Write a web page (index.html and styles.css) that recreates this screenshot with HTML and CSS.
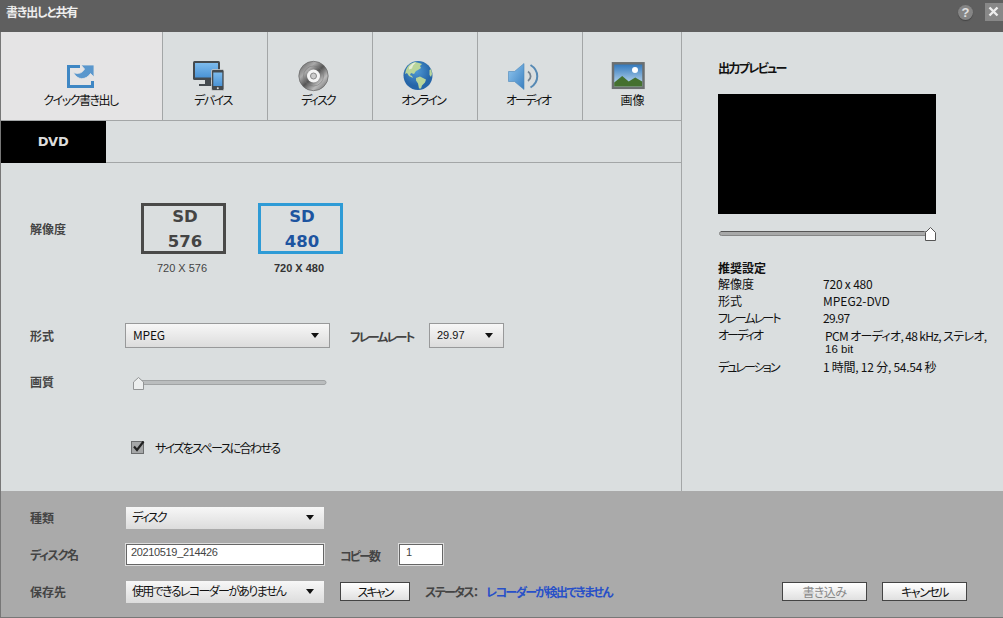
FILE: index.html
```html
<!DOCTYPE html>
<html lang="ja">
<head>
    <meta charset="UTF-8">
    <meta name="viewport" content="width=device-width, initial-scale=1.0">
    <title>書き出しと共有</title>
    <link rel="stylesheet" href="styles.css">
</head>
<body>
    <div class="window">
        <header class="titlebar">
            <h1>書き出しと共有</h1>
            <span class="help">?</span>
            <button class="close" type="button" aria-label="閉じる">
                <svg width="18" height="18" viewBox="0 0 18 18"><path d="M4.500 4.500l8 8M12.500 4.500l-8 8" stroke="#eee" stroke-width="2.4"/></svg>
            </button>
        </header>

        <div class="main">
            <section class="settings">
                <nav class="tabs">
                    <div class="tab active">
                        <svg width="36" height="36" viewBox="0 0 36 36">
                            <path d="M18 9.500H6.500v20h24V24" fill="none" stroke="#3f87c4" stroke-width="3"/>
                            <path d="M11.500 15.500c5 2 9 .5 11-3.500l-3.500-4h13v12l-3.500-3.500c-4.500 7-13.500 7-17-1z" fill="#5a97cd" stroke="#e5e4e5" stroke-width=".8"/>
                        </svg>
                        <span class="t-quick">クイック書き出し</span>
                    </div>
                    <div class="tab">
                        <svg width="36" height="36" viewBox="0 0 36 36">
                            <defs><linearGradient id="screen" x2="0" y2="1"><stop stop-color="#7dbbed"/><stop offset="1" stop-color="#4a93d6"/></linearGradient></defs>
                            <path d="M14 21h6v6h3v2H8v-2h6z" fill="#444a4f"/>
                            <rect x="2" y="4" width="27" height="19" rx="1.500" fill="#444a4f"/>
                            <rect x="4" y="6" width="23" height="14.500" fill="url(#screen)"/>
                            <rect x="20.500" y="12.500" width="12.500" height="21" rx="1.500" fill="#444a4f" stroke="#ddd" stroke-width=".7"/>
                            <rect x="22.300" y="15.500" width="9" height="13.500" fill="url(#screen)"/>
                            <circle cx="26.800" cy="31.300" r="1" fill="#ddd"/>
                        </svg>
                        <span class="t-device">デバイス</span>
                    </div>
                    <div class="tab">
                        <svg width="36" height="36" viewBox="0 0 36 36">
                            <defs><linearGradient id="disc" x2="1" y2="1"><stop stop-color="#555"/><stop offset=".3" stop-color="#aaa"/><stop offset=".5" stop-color="#555"/><stop offset=".72" stop-color="#bbb"/><stop offset="1" stop-color="#555"/></linearGradient></defs>
                            <circle cx="17.500" cy="19" r="14.700" fill="url(#disc)" stroke="#666" stroke-width=".7"/>
                            <circle cx="17.500" cy="19" r="10" fill="none" stroke="#777" stroke-width=".5"/>
                            <circle cx="17.500" cy="19" r="6.500" fill="#f4f4f4"/>
                            <circle cx="17.500" cy="19" r="3" fill="#ccc" stroke="#888"/>
                        </svg>
                        <span class="t-disc">ディスク</span>
                    </div>
                    <div class="tab">
                        <svg width="36" height="36" viewBox="0 0 36 36">
                            <defs><radialGradient id="sea" cx=".45" cy=".35"><stop stop-color="#4f98d4"/><stop offset="1" stop-color="#2565a8"/></radialGradient></defs>
                            <circle cx="17" cy="18.500" r="14.500" fill="url(#sea)"/>
                            <path d="M5 13c2-5 5-7 9-8l4 1 3 1-2 2 1 2-3 2-2 1-2 3-3-1-1 2 2 1 1 2-4-2-2-3-2 1zM15 21l4-1.500 6 3-1 3-3 3-1 3-2 0-1-5-2-3zM28.500 13l1.800-1 .7 5-1 3-1.500-2z" fill="#b9d59a"/>
                            <path d="M8 10l4-4 3-.5-3 3-1 3-3 1z" fill="#e4ecd8"/>
                        </svg>
                        <span class="t-online">オンライン</span>
                    </div>
                    <div class="tab">
                        <svg width="36" height="36" viewBox="0 0 36 36">
                            <defs><linearGradient id="horn" x2="1" y2="1"><stop stop-color="#93c8f0"/><stop offset="1" stop-color="#397fc0"/></linearGradient></defs>
                            <path d="M2.500 14.500h6L18 6.500v26l-9.500-8h-6z" fill="url(#horn)" stroke="#4a86ba" stroke-width=".6"/>
                            <path d="M22 14.500c3.500 2.500 3.500 7 0 9.500" fill="none" stroke="#75828e" stroke-width="1.800"/>
                            <path d="M24.500 8c9 5.500 9 17 0 22.500" fill="none" stroke="#5689b4" stroke-width="2"/>
                        </svg>
                        <span class="t-audio">オーディオ</span>
                    </div>
                    <div class="tab last">
                        <svg width="36" height="36" viewBox="0 0 36 36">
                            <defs><linearGradient id="sky" x2="0" y2="1"><stop stop-color="#2b74bb"/><stop offset="1" stop-color="#d2e7f5"/></linearGradient></defs>
                            <rect x="3" y="6.300" width="30.500" height="24.500" fill="url(#sky)" stroke="#6b6f70" stroke-width="2.500"/>
                            <path d="M4.200 25.500l8-6.500 6.500 5.500 6.500-4 7 4v5h-28z" fill="#44702f"/>
                            <circle cx="25" cy="13" r="3" fill="#fff"/>
                        </svg>
                        <span class="t-image">画像</span>
                    </div>
                </nav>
                <div class="subtabs">
                    <div class="subtab">DVD</div>
                </div>

                <div class="row resolution">
                    <span class="label">解像度</span>
                    <div class="preset">
                        <div class="preset-box">SD<br>576</div>
                        <span>720 X 576</span>
                    </div>
                    <div class="preset selected">
                        <div class="preset-box">SD<br>480</div>
                        <span>720 X 480</span>
                    </div>
                </div>
                <div class="row format">
                    <span class="label">形式</span>
                    <div class="select format-select"><span>MPEG</span><i class="arrow"></i></div>
                    <span class="label-inline t-frame">フレームレート</span>
                    <div class="select rate-select"><span>29.97</span><i class="arrow"></i></div>
                </div>
                <div class="row quality">
                    <span class="label">画質</span>
                    <svg width="196" height="16" viewBox="0 0 196 16">
                        <rect x="4" y="4.500" width="190" height="4" rx="2" fill="#babdbe" stroke="#a0a3a4"/>
                        <path d="M1.500 13.500V6l5-4.500 5 4.500v7.500z" fill="#eceeee" stroke="#939596"/>
                    </svg>
                </div>
                <div class="row fit">
                    <svg width="14" height="14" viewBox="0 0 14 14">
                        <rect x=".5" y=".5" width="12" height="12" fill="#a5a7a8" stroke="#6b6d6e"/>
                        <path d="M3 5.500l3 3.500 6.500-8.500" fill="none" stroke="#222" stroke-width="2.200"/>
                    </svg>
                    <span class="t-fit">サイズをスペースに合わせる</span>
                </div>
            </section>

            <aside class="preview">
                <h2 class="t-preview">出力プレビュー</h2>
                <div class="screen"></div>
                <svg class="seek" width="220" height="16" viewBox="0 0 220 16">
                    <rect x="1.500" y="5.500" width="212" height="4" rx="2" fill="#a8a9a9" stroke="#858686"/>
                    <path d="M3 5.500h203" stroke="#555"/>
                    <path d="M207.500 14.500V6.500l5-5 5 5v8z" fill="#fff" stroke="#555"/>
                </svg>
                <h2 class="t-recommend">推奨設定</h2>
                <dl>
                    <dt>解像度</dt><dd class="v-size">720 x 480</dd>
                    <dt>形式</dt><dd>MPEG2-DVD</dd>
                    <dt class="t-frame">フレームレート</dt><dd class="v-rate">29.97</dd>
                    <dt class="t-audio">オーディオ</dt><dd class="audio">PCM オーディオ, 48 kHz, ステレオ,<br><span class="bits">16 bit</span></dd>
                    <dt class="t-duration">デュレーション</dt><dd class="v-time">1 時間, 12 分, 54.54 秒</dd>
                </dl>
            </aside>
        </div>

        <footer class="output">
            <div class="row">
                <span class="label">種類</span>
                <div class="select"><span class="t-disc">ディスク</span><i class="arrow"></i></div>
            </div>
            <div class="row">
                <span class="label t-name">ディスク名</span>
                <div class="field name-field">20210519_214426</div>
                <span class="label-inline t-copy">コピー数</span>
                <div class="field copy-field">1</div>
            </div>
            <div class="row">
                <span class="label">保存先</span>
                <div class="select"><span class="t-recorder">使用できるレコーダーがありません</span><i class="arrow"></i></div>
                <button class="scan t-scan" type="button">スキャン</button>
                <span class="label-inline t-status">ステータス：</span>
                <span class="status">レコーダーが検出できません</span>
                <button class="write" type="button" disabled>書き込み</button>
                <button class="cancel t-cancel" type="button">キャンセル</button>
            </div>
        </footer>
    </div>
</body>
</html>
```
FILE: styles.css
```css
* {
    box-sizing: border-box;
}
body {
    margin: 0;
    font-family: "Noto Sans CJK JP", sans-serif;
    font-size: 12px;
    line-height: 16px;
    font-feature-settings: "palt";
    color: #111;
}
h1, h2, dl, dd {
    margin: 0;
    font-size: 12px;
}
svg {
    display: block;
    flex: none;
}
span, dt, dd, h1, h2, button {
    white-space: nowrap;
}
.window {
    display: flex;
    flex-direction: column;
    width: 1003px;
    height: 618px;
    overflow: hidden;
    background: #dadedf;
    border-bottom: 1px solid #777;
}

/* title bar */
.titlebar {
    display: flex;
    align-items: flex-start;
    height: 32px;
    padding: 4px 0 0 6px;
    background: #5f5f5f;
}
.titlebar h1 {
    flex: 1;
    color: #eee;
    font-weight: bold;
    letter-spacing: -1.1px;
}
.help {
    width: 15px;
    height: 15px;
    margin: 1px 12px 0 0;
    border-radius: 50%;
    background: #858585;
    box-shadow: 0 1px 1px #444;
    color: #e0e0e0;
    font: bold 13px/15px "Liberation Sans", sans-serif;
    text-align: center;
}
.close {
    width: 18px;
    height: 18px;
    margin-top: -1px;
    padding: 0;
    border: none;
    background: #888;
}

.main {
    display: flex;
    height: 459px;
    border-left: 1px solid #777;
}
.settings {
    width: 681px;
    border-right: 1px solid #a3a6a7;
}

/* tabs */
.tabs {
    display: flex;
    height: 89px;
    border-bottom: 1px solid #a3a6a7;
}
.tab {
    display: flex;
    flex-direction: column;
    align-items: center;
    width: 105px;
    padding: 25px 5px 0 0;
    border-right: 1px solid #a3a6a7;
}
.tab svg {
    margin-right: 7px;
}
.tab.active {
    width: 162px;
    padding-right: 2px;
    background: #e5e4e5;
}
.tab.active svg {
    margin-right: 2px;
}
.tab.active span {
    padding-left: 0;
}
.tab.last {
    width: 98px;
    padding: 25px 0 0;
    border-right: none;
}
.tab.last svg {
    margin-right: 8px;
}
.tab span {
    margin-top: -1px;
    padding-left: 1px;
}
.subtabs {
    height: 42px;
    border-bottom: 1px solid #a3a6a7;
}
.subtab {
    width: 105px;
    height: 42px;
    padding-right: 1px;
    background: #000;
    color: #ddd;
    font: bold 13px/42px "DejaVu Sans", sans-serif;
    letter-spacing: -0.3px;
    text-align: center;
}

/* settings rows */
.row {
    display: flex;
    align-items: center;
}
.label {
    width: 95px;
    color: #444;
    font-weight: bold;
}
.label-inline {
    color: #444;
    font-weight: bold;
}
.settings .row {
    padding-left: 29px;
}
.resolution {
    align-items: flex-start;
    height: 159px;
    padding-top: 40px;
}
.resolution .label {
    width: 111px;
    padding-top: 18px;
}
.preset {
    width: 85px;
    margin-right: 32px;
    text-align: center;
    font: 11px/16px "Liberation Sans", sans-serif;
    color: #444;
}
.preset-box {
    display: flex;
    flex-direction: column;
    justify-content: center;
    height: 51px;
    margin-bottom: 6px;
    padding-left: 3px;
    border: 3px solid #4a4a49;
    font: bold 16.500px/25px "DejaVu Sans", sans-serif;
}
.preset span {
    padding-right: 3px;
}
.preset.selected {
    font-weight: bold;
    color: #333;
}
.preset.selected .preset-box {
    border-color: #2e9bd6;
    color: #1d54a0;
}
.format {
    height: 27px;
}
.select {
    display: flex;
    align-items: center;
    justify-content: space-between;
    width: 198px;
    height: 22px;
    padding: 0 10px 2px 6px;
    background: linear-gradient(#f7f7f7, #dcdcdc);
}
.format .select {
    height: 25px;
    border: 1px solid #98999a;
}
.format .format-select {
    width: 205px;
    padding-left: 7px;
    margin: 0 20px 0 0;
}
.format-select span {
    letter-spacing: -0.2px;
}
.format .t-frame {
    width: 64px;
    padding-top: 3px;
}
.format .rate-select {
    width: 75px;
    margin-left: 15px;
    padding-left: 7px;
}
.rate-select span {
    font: 11px "Liberation Sans", sans-serif;
}
.arrow {
    border: 4px solid transparent;
    border-top: 5px solid #111;
    border-bottom: none;
    margin-top: 2px;
}
.quality {
    height: 66px;
}
.quality svg {
    margin: 4px 0 0 7px;
}
.settings .fit {
    height: 66px;
    padding-left: 130px;
    gap: 10px;
}

/* preview */
.preview {
    padding: 28px 0 0 36px;
}
.screen {
    width: 218px;
    height: 120px;
    margin-top: 18px;
    background: #000;
}
.seek {
    margin: 12px 0 18px;
}
.preview dl {
    display: grid;
    grid-template-columns: 106px auto;
    grid-template-rows: 17px 17px 17px 32px 17px;
}
.preview dd {
    margin-left: -1px;
}
.preview dd.audio {
    line-height: 12px;
    padding: 3px 0 0 2px;
    letter-spacing: -0.65px;
}
.bits {
    font: 11.500px/12px "Liberation Sans", sans-serif;
    letter-spacing: 0;
}
.v-size {
    letter-spacing: -0.2px;
}
.v-rate {
    letter-spacing: -0.7px;
}
.v-time {
    letter-spacing: -0.25px;
}

/* output bar */
.output {
    display: flex;
    flex-direction: column;
    height: 126px;
    padding: 8px 36px 0 29px;
    background: #aaa;
    border-left: 1px solid #777;
}
.output .row {
    height: 37px;
}
.output .label {
    width: 96px;
}
.field {
    height: 21px;
    padding: 0 4px;
    background: #fff;
    border: 1px solid #666;
    outline: 1px solid #ddd;
    color: #444;
    font: 11px/15px "Liberation Sans", sans-serif;
}
.name-field {
    width: 198px;
    letter-spacing: -0.35px;
}
.output .t-copy {
    width: 39px;
    margin-left: 16px;
    padding-top: 3px;
}
.copy-field {
    width: 44px;
    margin-left: 20px;
    padding-left: 6px;
}
.output button {
    height: 19px;
    padding: 0;
    border: 1px solid #444;
    background: linear-gradient(#fff, #e0e0e0);
    color: #111;
    font: inherit;
    line-height: 15px;
    font-feature-settings: "palt";
}
.output .scan {
    width: 70px;
    margin: 0 15px 0 16px;
}
.output .t-status {
    width: 53px;
}
.status {
    margin-left: 8px;
    color: #2850c8;
    font-weight: bold;
    letter-spacing: -1.7px;
}
.output .write {
    width: 85px;
    margin-left: auto;
    margin-right: 15px;
    color: #888;
    letter-spacing: -0.5px;
}
.output .cancel {
    width: 85px;
}

/* kana are set tight */
.t-name {
    letter-spacing: -1.3px;
}
.t-quick, .t-device, .output .t-cancel {
    letter-spacing: -1.5px;
}
.t-fit, .t-recorder, .t-preview, .t-status {
    letter-spacing: -1.65px;
}
.t-disc, .t-online, .t-audio, .t-frame, .t-duration, .t-copy, .output .t-scan {
    letter-spacing: -1.9px;
}
```
